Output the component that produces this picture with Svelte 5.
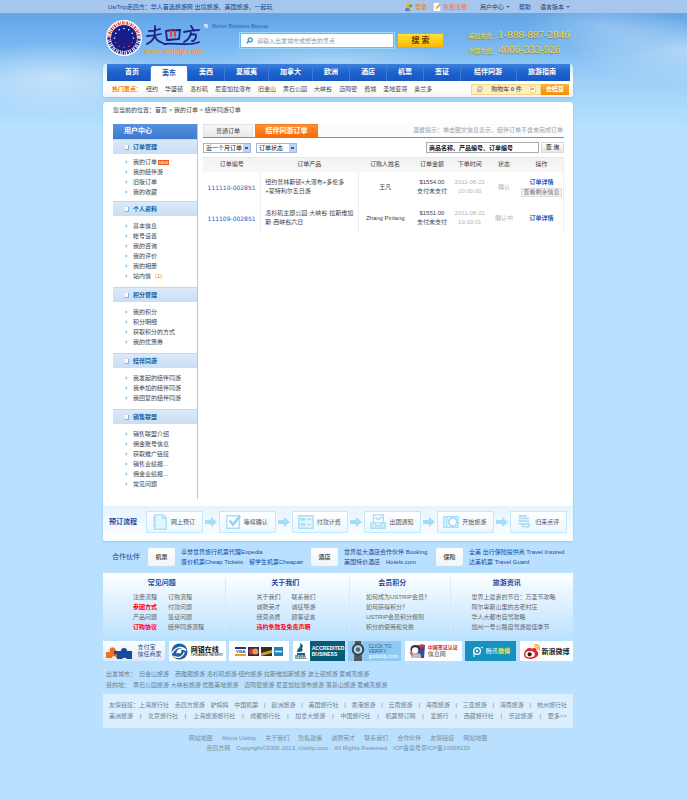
<script>
  const nav = ['首页', '美东', '美西', '夏威夷', '加拿大', '欧洲', '酒店', '机票', '签证', '结伴同游', '旅游指南'];
  const spots = ['纽约', '华盛顿', '洛杉矶', '尼亚加拉瀑布', '旧金山', '黄石公园', '大峡谷', '迈阿密', '费城', '圣地亚哥', '奥兰多'];
  const groups = [
    { title: '订单管理', items: ['我的订单', '我的结伴游', '旧版订单', '我的收藏'] },
    { title: '个人资料', items: ['基本信息', '帐号设置', '我的咨询', '我的评价', '我的相册', '站内信'] },
    { title: '积分管理', items: ['我的积分', '积分明细', '获取积分的方式', '我的优惠券'] },
    { title: '结伴同游', items: ['我发起的结伴同游', '我参加的结伴同游', '我回复的结伴同游'] },
    { title: '销售联盟', items: ['销售联盟介绍', '佣金账号信息', '获取推广链接', '销售业绩报...', '佣金业绩报...', '常见问题'] }
  ];
  const orders = [
    { id: '111110-002851', name: '纽约普林斯顿+大瀑布+多伦多+蒙特利尔五日游', who: '王凡', price: '$1554.00', time: '10:00:00', state: '确认', more: true },
    { id: '111109-002851', name: '洛杉矶主题公园·大峡谷·拉斯维加斯·西峡谷六日', who: 'Zhang Pinlang', price: '$1551.00', time: '10:19:01', state: '确认中', more: false }
  ];
  const steps = ['网上预订', '等候确认', '付款计费', '出团通知', '开始旅游', '归来点评'];
  const partners = [
    { tag: '机票', rows: ['享誉世界旅行机票代理Expedia', '廉价机票Cheap Tickets　留学生机票Cheapair'] },
    { tag: '酒店', rows: ['世界最大酒店合作伙伴 Booking', '美国特价酒店　Hotels.com'] },
    { tag: '保险', rows: ['全美 出行保险提供商 Travel Insured', '达美机票 Travel Guard'] }
  ];
  const help = [
    { title: '常见问题', cls: 'two', items: ['注册流程', '订购流程', '参团方式', '付款问题', '产品问题', '签证问题', '订购协议', '结伴同游流程'], red: [2, 6] },
    { title: '关于我们', cls: 'two', items: ['关于我们', '联系我们', '诚聘英才', '诚征导游', '经营资质', '顾客证言', '违约条款及免责声明'], red: [6] },
    { title: '会员积分', cls: 'one', items: ['如何成为USTRIP会员？', '如何获得积分？', 'USTRIP会员积分规则', '积分的使用和兑换'], red: [] },
    { title: '旅游资讯', cls: 'one', items: ['世界上最贵的节日：万圣节攻略', '阿尔卑斯山里的古老村庄', '华人大都市自驾攻略', '加州一号公路自驾游最佳季节'], red: [] }
  ];
  const links1 = ['走四方旅游', '驴妈妈', '中国机票', '欧洲旅游', '美国旅行社', '香港旅游', '云南旅游', '海南旅游', '三亚旅游', '海南旅游', '杭州旅行社'];
  const links2 = ['美洲旅游', '北京旅行社', '上海旅游旅行社', '成都旅行社', '加拿大旅游', '中国旅行社', '机票预订网', '爱旅行', '西藏旅行社', '乐途旅游'];
  const footer = ['网站地图', 'About Usitrip', '关于我们', '隐私政策', '诚聘英才', '联系我们', '合作伙伴', '友情链接', '网站地图'];
  let keyword = $state('');
</script>

<div class="page">
  <div class="topbar">
    <div class="wrap topin">
      <span>UsiTrip走四方：华人首选旅游网 出境旅游、美国旅游、一起玩</span>
      <nav class="user">
        <a class="org" href="#login"><svg viewBox="0 0 10 10"><circle cx="3.5" cy="3" r="2.3" fill="#f0b040"/><circle cx="7" cy="3.5" r="2" fill="#5b9c3c"/><path d="M0 10c0-6 7-6 7 0z" fill="#3c87cf"/><path d="M5 9c1-4 5-3 5 0z" fill="#eec25c"/></svg>登录</a>
        <a class="org reg" href="#reg"><svg viewBox="0 0 10 10"><path d="M1 0h6l2 2v8H1z" fill="#fff"/><path d="M3 8l1-3 4-4 1 2-4 4z" fill="#eea228"/></svg>免费注册</a>
        <a href="#center">用户中心 <i class="caret"></i></a>
        <a href="#help">帮助</a>
        <a href="#lang">语言版本 <i class="caret"></i></a>
      </nav>
    </div>
  </div>

  <header class="wrap head">
    <a class="logo" href="#home" aria-label="走四方">
      <svg viewBox="0 0 36 36">
        <circle cx="18" cy="18" r="18" fill="#fff"/>
        <path d="M3 18a15 15 0 0 1 30 0" fill="none" stroke="#d8423e" stroke-width="3.4" stroke-dasharray="1.6 .9 .7 1.1"/>
        <path d="M3 18a15 15 0 0 0 30 0" fill="none" stroke="#2b2d91" stroke-width="3.4" stroke-dasharray="1.8 .8 .8 1"/>
        <circle cx="18" cy="18" r="13" fill="#171c88"/>
        {#each Array(12) as _, i}
          <circle cx={18 + 9.5 * Math.cos(i * Math.PI / 6)} cy={18 + 9.5 * Math.sin(i * Math.PI / 6)} r=".8" fill={i > 0 && i < 6 ? '#e24440' : '#fff'}/>
        {/each}
      </svg>
      <svg class="brush" viewBox="0 0 56 22" fill="none" stroke="#20208c" stroke-width="1.8" stroke-linecap="round">
        <path d="M3 6c4 0 8-1 11-2M9 1c0 4 0 7-1 10M1 11c5 0 10-1 14-2M9 10c-1 4-4 7-8 9M9 11c1 4 4 6 8 7"/>
        <path d="M20 6c5-1 10-1 14-1l-1 9c-4 0-8 1-12 1z"/><path d="M25 6v5M29 6v5" stroke="#e23c30"/>
        <path d="M45 1l2 3M38 7c5-1 10-2 15-2M45 6c0 6-3 9-7 11M44 10c3-1 5-1 6 0 0 4-1 6-4 6"/>
        <path d="M18 19c12-2 24 3 35-2"/>
      </svg>
      <b>www.usitrip.com</b>
    </a>
    <div class="mid">
      <p><svg viewBox="0 0 10 10"><circle cx="5" cy="5" r="5" fill="#fff"/><path d="M2 5l2 3 4-6" stroke="#4784c5" stroke-width="2" fill="none"/></svg>Better Business Bureau</p>
      <form class="search" onsubmit={(e) => e.preventDefault()}>
        <label><svg viewBox="0 0 10 10"><circle cx="6" cy="4" r="3" fill="#d6efff" stroke="#278fd0" stroke-width="1.6"/><path d="M4 6L1 9" stroke="#278fd0" stroke-width="2"/></svg>
          <input aria-label="搜索" placeholder="请输入出发城市或想去的景点" bind:value={keyword} />
        </label>
        <button>搜 索</button>
      </form>
    </div>
    <div class="phones">
      <p>美加免费：<b>1-888-887-2846</b></p>
      <p>中国免费：<b>4006-333-926</b></p>
    </div>
  </header>

  <div class="wrap navbox">
    <nav class="nav">
      {#each nav as n, i}<a href="#nav{i}" class:on={i === 1} class:wide={i === 9}>{n}</a>{/each}
    </nav>
    <div class="sub">
      <b>热门景点：</b>
      {#each spots as s}<a href="#spot">{s}</a>{/each}
      <div class="cart">
        <svg viewBox="0 0 10 10"><path d="M1 5h8l-1 4H2z" fill="#bbb"/><path d="M2 5l2-4h4l1 4" fill="none" stroke="#888"/></svg>
        <span>购物车 <b>0</b> 件</span><i class="drop"></i>
      </div>
      <button class="pay">去结算</button>
    </div>
  </div>

  <main class="wrap panel">
    <div class="crumb">您当前的位置：<a href="#home">首页</a> &gt; <a href="#o">我的订单</a> &gt; 结伴同游订单</div>
    <div class="cols">
      <aside>
        <h2>用户中心</h2>
        {#each groups as g, gi}
          <h3><i></i>{g.title}</h3>
          <ul class:first={gi === 0}>
            {#each g.items as it, i}
              <li><a href="#item">{it}</a>{#if gi === 0 && i === 0}<em class="new">NEW</em>{/if}{#if gi === 1 && i === 5}<em class="num">(1)</em>{/if}</li>
            {/each}
          </ul>
        {/each}
      </aside>
      <section class="content">
        <div class="tabs">
          <button>普通订单</button><button class="on">结伴同游订单</button>
          <span>温馨提示：单击图文信息表示，结伴订单不含未完成订单</span>
        </div>
        <form class="filter" onsubmit={(e) => e.preventDefault()}>
          <span class="sel s1"><select aria-label="时间"><option>近一个月订单</option></select></span>
          <span class="sel s2"><select aria-label="状态"><option>订单状态</option></select></span>
          <input aria-label="关键字" value="商品名称、产品编号、订单编号" />
          <button>查 询</button>
        </form>
        <table>
          <colgroup><col style="width:16%"><col style="width:27%"><col style="width:15%"><col style="width:11%"><col style="width:10%"><col style="width:9%"><col style="width:12%"></colgroup>
          <thead><tr><th>订单编号</th><th>订单产品</th><th>订购人姓名</th><th>订单金额</th><th>下单时间</th><th>状态</th><th>操作</th></tr></thead>
          <tbody>
            {#each orders as o}
              <tr>
                <td class="id"><a href="#order">{o.id}</a></td>
                <td class="name">{o.name}</td>
                <td class="who">{o.who}</td>
                <td>{o.price}<br>支付未支付</td>
                <td class="dim">2011-08-22<br>{o.time}</td>
                <td class="dim">{o.state}</td>
                <td class="op"><a href="#detail">订单详情</a>{#if o.more}<button>查看剩余信息</button>{/if}</td>
              </tr>
            {/each}
          </tbody>
        </table>
      </section>
    </div>
    <div class="flow">
      <b>预订流程</b>
      {#each steps as s, i}
        {#if i > 0}<svg class="arr" viewBox="0 0 12 10"><path d="M0 3h6V0l6 5-6 5V7H0z" fill="#a5ddf8"/></svg>{/if}
        <div class="step">
          <svg viewBox="0 0 18 18" fill="none" stroke="#a9dcf7" stroke-width="1.5">
            {#if i === 0}<path d="M3 1h10l3 3v13H3z" fill="#e2f5ff"/><path d="M1 4h3M1 7h3M1 10h3M1 13h3M12 1v4h4"/>
            {:else if i === 1}<path d="M2 2h14v14H2z" fill="#fff"/><path d="M5 7l4 5 8-10" stroke="#96d6f5" stroke-width="3"/>
            {:else if i === 2}<path d="M1 2h16v14H1z" fill="#e2f5ff"/><path d="M3 6h5M3 12h5" stroke-width="3"/><path d="M10 6h5M10 12h5"/>
            {:else if i === 3}<path d="M4 1h11v9H4z" fill="#fff"/><path d="M6 4l3 3 5-4M1 10h4l2 3h5l2-3h3v6H1z" fill="#d4effd"/>
            {:else if i === 4}<path d="M1 3h16v12H1z" fill="#e2f5ff"/><circle cx="11" cy="9" r="4.5" fill="#fff" stroke-width="2"/><path d="M4 3v12"/>
            {:else}<path d="M3 2h9M3 5h12M3 8h12M3 11h12M6 14h6M12 16l4-4" stroke-width="2"/>{/if}
          </svg>
          <span>{s}</span>
        </div>
      {/each}
    </div>
  </main>

  <section class="wrap partners">
    <b>合作伙伴</b>
    {#each partners as p}
      <span class="tag">{p.tag}</span>
      <div>{#each p.rows as r}<a href="#p">{r}</a>{/each}</div>
    {/each}
  </section>

  <section class="wrap help">
    {#each help as h, hi}
      <div class="hcol h{hi}">
        <h4>{h.title}</h4>
        <div class={h.cls}>
          {#each h.items as it, i}<a href="#h" class:red={h.red.includes(i)} class:span={hi === 1 && i === 6}>{it}</a>{/each}
        </div>
      </div>
    {/each}
  </section>

  <div class="wrap badges">
    <a class="ali" href="#b"><svg viewBox="0 0 28 16"><path d="M0 15V9h4a3 3 0 1 1 5 0h5v6h-4a2 2 0 0 0-4 0z" fill="#ee711e"/><path d="M11 16v-5a2 2 0 1 1 0-3h4a3 3 0 1 1 6 0h5v8h-5a3 3 0 0 0-5 0z" fill="#17499c"/></svg><span>支付宝<br>信任商家</span></a>
    <a class="bank" href="#b"><svg viewBox="0 0 18 18"><circle cx="9" cy="9" r="8.5" fill="#24609f"/><path d="M1 11c4-8 12-8 15-3-5-3-9-1-10 3M3 14c5 3 10 0 11-4" fill="none" stroke="#fff" stroke-width="1.4"/><circle cx="9" cy="9" r="2" fill="#fff"/></svg><span><b>网银在线</b><small>CHINABANK PAYMENT</small></span></a>
    <a class="cards" href="#b"><svg viewBox="0 0 48 9"><path d="M0 0h11v9H0z" fill="#fff"/><path d="M0 0h11v2H0z" fill="#1d3c84"/><path d="M0 7h11v2H0z" fill="#e89d24"/><path d="M13 0h11v9H13z" fill="#252a6a"/><circle cx="16.8" cy="4.5" r="3" fill="#df2c28"/><circle cx="20.4" cy="4.5" r="3" fill="#f1a32b"/><path d="M26 0h11v9H26z" fill="#25351e"/><path d="M26 6l11-3v3l-11 3z" fill="#dd9432"/><path d="M39 0h9v9h-9z" fill="#2384b8"/><path d="M40 4.5h7" stroke="#cfeaff" stroke-width="1.6"/><text x="1" y="6.2" font-size="4" font-weight="bold" fill="#1d3c84">VISA</text></svg></a>
    <a class="bbb" href="#b"><span class="bl"><svg viewBox="0 0 12 12"><path d="M5 0c6 3 0 5 3 7L6 9C0 6 7 4 5 0zM3 5l2 4H2zM2 10h8v2H2z" fill="#0c6480"/></svg><b>BBB.</b></span><span class="br">ACCREDITED<br>BUSINESS</span></a>
    <a class="god" href="#b"><svg viewBox="0 0 14 20"><path d="M4 0h6l1 20H3z" fill="#555"/><circle cx="7" cy="8.5" r="6.2" fill="#39424a"/><circle cx="7" cy="8.5" r="4.3" fill="#b9d8e8"/><circle cx="7" cy="8.5" r="2.3" fill="#3d6f92"/></svg><span>CLICK TO<br>VERIFY<br><i>godaddy.com</i></span></a>
    <a class="cn" href="#b"><svg viewBox="0 0 17 18"><path d="M9 2h8l-1 14H8z" fill="#3b4b98"/><path d="M7 3l8-2 1 3-7 1z" fill="#e2323c"/><circle cx="6.5" cy="7" r="5" fill="#2c3242"/><circle cx="6.5" cy="8" r="3.4" fill="#fff"/><path d="M3 11h9l1 5H2z" fill="#b9bfd0"/><path d="M0 9l4 3-1 2z" fill="#d8262e"/></svg><span><b>中国签证认证</b>信息网</span></a>
    <a class="tx" href="#b"><svg viewBox="0 0 11 11"><circle cx="5" cy="5" r="3.4" fill="none" stroke="#fff" stroke-width="1.3"/><circle cx="5" cy="5" r="1.2" fill="#fff"/><path d="M2 6v5M9 1l2 1" stroke="#fff"/></svg><span>腾讯<b>微博</b></span></a>
    <a class="sina" href="#b"><svg viewBox="0 0 18 16"><path d="M1 11C1 7 7 2 9 5c4-2 6 0 5 2 6 4-1 9-6 9s-7-2-7-5z" fill="#df2630"/><ellipse cx="7.5" cy="11" rx="5" ry="3.5" fill="#fff"/><circle cx="7" cy="11" r="2.2" fill="#202020"/><path d="M12 3c2-1 4 1 3 3M12 .8c4-1 6 2 5.3 6" fill="none" stroke="#f39a24" stroke-width="1.3"/></svg><b>新浪微博</b></a>
  </div>

  <div class="wrap hot">
    <p>出发城市：　旧金山旅游　西雅图旅游 洛杉矶旅游 纽约旅游 拉斯维加斯旅游 波士顿旅游 夏威夷旅游</p>
    <p>目的地：　黄石公园旅游 大峡谷旅游 优胜美地旅游　迈阿密旅游 尼亚加拉瀑布旅游 落基山旅游 夏威夷旅游</p>
  </div>

  <div class="wrap links">
    <p><span>友情链接：上海旅行社</span>{#each links1 as l, i}<a href="#l">{l}</a>{#if i > 1 && i < 10}<i>|</i>{/if}{/each}</p>
    <p>{#each links2 as l}<a href="#l">{l}</a><i>|</i>{/each}<a href="#more">更多&gt;&gt;</a></p>
  </div>

  <footer class="wrap foot">
    <nav>{#each footer as f}<a href="#f">{f}</a>{/each}</nav>
    <p>走四方网　Copyright©2005-2013, Usitrip.com　All Rights Reserved　ICP备案号京ICP备10058130</p>
  </footer>
</div>

<style>
  :global(body) { margin: 0; background: #b9e1ff; }
  .page {
    font: 6px/10px "Liberation Sans", "Noto Sans CJK SC", sans-serif;
    color: #444; padding-bottom: 48px;
    background:
      radial-gradient(ellipse 110px 36px at 8% 78px, #ffffff66, #fff0),
      radial-gradient(ellipse 120px 34px at 100% 50px, #ffffff66, #fff0),
      radial-gradient(ellipse 80px 26px at 88% 26px, #ffffff44, #fff0),
      radial-gradient(ellipse 120px 20px at 48% 62px, #ffffff44, #fff0),
      linear-gradient(#5a9de2, #74b4ef 40px, #9dd0f8 80px, #b9e1ff 130px);
  }
  * { box-sizing: border-box; }
  p, h2, h3, h4, ul { margin: 0; padding: 0; list-style: none; font-size: 6px; }
  a { color: inherit; text-decoration: none; }
  button, input, select { font: inherit; color: inherit; border: 0; padding: 0; margin: 0; border-radius: 0; background: none; min-width: 0; }
  svg { flex: none; display: block; }
  .wrap { width: calc(100% - 32px); max-width: 470px; margin: 0 auto; }
  .page { padding-right: 11px; }
  .topbar { margin-right: -11px; padding-right: 11px; background: #a7c6ee; color: #13437f; height: 13px; }
  .topin { display: flex; justify-content: space-between; padding: 2px 3px 0 5px; }
  .user { display: flex; gap: 9px; }
  .user a { display: flex; align-items: center; gap: 2px; }
  .user svg { width: 8px; height: 8px; }
  .user .org { color: #f57a10; }
  .user .reg { margin-right: 4px; margin-left: -3px; }
  .caret { border: 2px solid transparent; border-top-color: #3c69a8; border-bottom: 0; }

  .head { display: flex; height: 51px; padding-left: 3px; }
  .logo { display: grid; grid-template-columns: 36px 56px; column-gap: 4px; width: 98px; padding-top: 7px; align-content: start; }
  .logo > svg:first-child { width: 36px; height: 36px; grid-row: span 2; }
  .brush { width: 56px; height: 24px; margin-top: 4px; }
  .logo b { font: 700 8px/8px "Liberation Serif", serif; color: #f7a11a; margin-left: -2px; }
  .mid { flex: 1; padding-top: 8px; }
  .mid p { display: flex; gap: 4px; color: #2b62a8; font-family: "Liberation Serif", serif; align-items: center; }
  .mid p svg { width: 4px; height: 4px; }
  .search { display: flex; gap: 3px; margin: 2px 0 0 36px; }
  .search label { display: flex; align-items: center; gap: 4px; width: 154px; height: 15px; padding: 0 5px; background: #fff; border: 1px solid #65bdf2; box-shadow: 0 0 0 1px #9bd9fb; }
  .search label svg { width: 7px; height: 7px; }
  .search input { flex: 1; outline: 0; }
  .search input::placeholder { color: #999; opacity: 1; }
  .search button { width: 47px; height: 15px; background: linear-gradient(#ffe22c, #fbb90a); border: 1px solid #e7a818; color: #6d3304; font-size: 8px; font-weight: 700; }
  .phones { width: 105px; padding-top: 14px; color: #ffd52c; text-shadow: 0 1px 1px #6a7a58; }
  .phones p { line-height: 14px; height: 15px; white-space: nowrap; }
  .phones b { font: 400 11px/14px "Liberation Serif", serif; }

  .navbox { background: linear-gradient(#ffffff88, #fff 18px); border-radius: 3px; box-shadow: 0 1px 3px #8fc6ec; }
  .nav { display: flex; height: 17px; margin: 0 3px 0 4px; padding-left: 7px; background: linear-gradient(#3b80df, #1d62cd 50%, #1857c2); color: #fff; font-size: 7px; font-weight: 700; }
  .nav a { padding: 0 11px; line-height: 16px; border-right: 1px solid #3d7bd6; white-space: nowrap; flex: none; }
  .nav a:last-child { border: 0; padding-right: 0; }
  .nav .wide { padding: 0 14px 0 13px; }
  .nav .on { background: #fff; color: #1d56b4; margin-top: 2px; border-radius: 2px 2px 0 0; line-height: 13px; }
  .sub { display: flex; align-items: center; gap: 7px; height: 16px; padding: 0 4px 0 9px; white-space: nowrap; background: linear-gradient(#fff 50%, #f3f3f3); border-radius: 0 0 3px 3px; }
  .sub > b { color: #f97a12; margin-right: -3px; }
  .cart { margin-left: auto; display: flex; align-items: center; justify-content: space-around; width: 70px; height: 11px; background: #fdeec4; border: 1px solid #f3d58c; }
  .cart svg { width: 7px; height: 7px; }
  .cart b { color: #146cd2; }
  .drop { width: 6px; height: 7px; background: linear-gradient(#f7a53b, #f7a53b) 50% 50% / 3px 2px no-repeat #fff; border: 1px solid #f5d590; }
  .pay { width: 28px; height: 11px; margin-left: -7px; background: linear-gradient(#ffb62e, #f38d06); color: #fff; font-weight: 700; }

  .panel { margin-top: 5px; background: #fff; border: solid #9dd3f8; border-width: 0 0 1px; border-radius: 3px; box-shadow: 0 0 2px #7fc0ee; }
  .crumb { padding: 3px 10px 0; height: 22px; }
  .cols { display: flex; gap: 5px; padding: 0 9px 0 10px; }
  aside { width: 85px; flex: none; border-right: 1px solid #a5cff2; }
  h2 { height: 15px; line-height: 14px; padding-left: 11px; font-size: 7px; color: #fff; background: linear-gradient(#5893e0, #3c79cf); }
  h3 { display: flex; align-items: center; gap: 4px; height: 15px; padding-left: 12px; color: #175f9e; background: linear-gradient(#dce9f8, #c9def4); border-top: 1px solid #bcdaf4; }
  h3 i { width: 4px; height: 5px; border: solid #7db3de; border-width: 0 1px 1px 0; background: #fff; }
  aside ul { padding: 5px 0 6px 20px; }
  aside ul.first { padding: 3px 0 4px 20px; }
  aside ul:last-child { padding-bottom: 10px; }
  li { height: 10px; display: flex; align-items: center; }
  li::before { content: ""; width: 1px; height: 1px; border: solid #78bfe2; border-width: 1px 1px 0 0; transform: rotate(45deg); margin: 0 6px 0 -8px; box-sizing: content-box; flex: none; }
  em { font-style: normal; color: #f47a10; margin-left: 4px; }
  em.new { background: #f35c11; color: #fff; font-size: 4px; line-height: 5px; padding: 0 1px; margin-left: 1px; }
  .content { flex: 1; min-width: 0; }
  .tabs { display: flex; gap: 2px; height: 14px; border-bottom: 1px solid #ee6b2c; background: #fcfcfc; }
  .tabs button { width: 50px; background: linear-gradient(#f7f7f7, #e9e9e9); border: 1px solid #e3e3e3; border-bottom: 0; }
  .tabs .on { width: 63px; background: linear-gradient(#ff9232, #fb6a04); border-color: #f27a20; color: #fff; font-size: 7px; font-weight: 700; }
  .tabs span { margin-left: auto; line-height: 13px; color: #a2a2a2; white-space: nowrap; padding-right: 1px; }
  .filter { display: flex; height: 19px; align-items: center; color: #111; }
  .sel { position: relative; height: 10px; border: 1px solid #9fb5d2; display: flex; margin-right: 5px; }
  .s1 { width: 48px; } .s2 { width: 41px; }
  .sel select { appearance: none; width: 100%; line-height: 8px; padding-left: 2px; outline: 0; }
  .sel::after { content: ""; position: absolute; right: 0; top: 0; width: 7px; height: 8px; background: linear-gradient(#3d5b92, #3d5b92) 50% 50% / 3px 2px no-repeat #bcd2f6; pointer-events: none; }
  .filter input { width: 113px; height: 11px; margin-left: auto; border: 1px solid #aaa; padding: 0 2px; font-weight: 700; line-height: 9px; }
  .filter button { width: 23px; height: 11px; margin-left: 2px; line-height: 9px; background: linear-gradient(#fff, #e6e6e6); border: 1px solid #ddd; }
  table { width: 100%; table-layout: fixed; border-collapse: collapse; line-height: 9px; text-align: center; border-right: 1px solid #eee; }
  th { height: 14px; padding: 0; font-weight: 400; background: linear-gradient(#f2f2f2, #f7f7f7); border-top: 1px solid #e8e8e8; white-space: nowrap; }
  td { height: 31px; padding: 0; overflow-wrap: anywhere; }
  td.id { font-family: "DejaVu Sans", sans-serif; color: #1c5dc4; border-right: 1px solid #eee; }
  td.name { text-align: left; padding: 0 4px; border-right: 1px solid #eee; }
  td.who { white-space: nowrap; }
  .dim { color: #b5b5b5; }
  .op a { color: #1359c8; font-weight: 700; display: block; }
  .op button { width: 41px; height: 9px; line-height: 7px; background: #f3f3f3; border: 1px solid #ddd; color: #777; white-space: nowrap; margin: 1px auto 0; display: block; }

  .flow { display: flex; align-items: center; height: 35px; margin-top: 7px; padding: 0 6px 3px; background: linear-gradient(#e4f4ff, #fff); border-radius: 0 0 3px 3px; }
  .flow > b { font-size: 7px; color: #1c479e; width: 37px; flex: none; white-space: nowrap; }
  .arr { width: 12px; height: 10px; margin: 0 2px; }
  .step { flex: 1; display: flex; align-items: center; gap: 3px; height: 22px; padding-left: 5px; background: linear-gradient(#fff, #eaf7ff); border: 1px solid #c5e8fb; white-space: nowrap; color: #555; }
  .step svg { width: 16px; height: 16px; }

  .partners { display: flex; align-items: center; height: 31px; padding: 0 0 2px 9px; color: #21489a; white-space: nowrap; }
  .partners > b { font-size: 7px; font-weight: 400; width: 36px; flex: none; }
  .tag { width: 27px; height: 18px; flex: none; line-height: 18px; text-align: center; font-weight: 700; color: #555; background: linear-gradient(#fff, #eef5fa); border-radius: 2px; }
  .partners div { width: 136px; flex: none; padding-left: 6px; }
  .partners div:nth-of-type(2) { width: 98px; }
  .partners div:nth-of-type(3) { width: 100px; }
  .partners div a { display: block; }

  .help { display: flex; height: 68px; padding-top: 5px; background: linear-gradient(#fff, #dff1ff 30px, #b9e1ff); color: #666; }
  .hcol { flex: 123; height: 56px; border-right: 1px solid #d6eaf8; white-space: nowrap; }
  .hcol:last-child { border: 0; }
  .h2 { flex: 100; }
  .hcol h4 { font-size: 7px; color: #1e48a0; padding-right: 5px; text-align: center; }
  .h2 h4 { padding-right: 15px; }
  .h3 h4 { padding-right: 10px; }
  .hcol a { line-height: 10px; }
  .two { display: grid; grid-template-columns: 35px 1fr; padding: 4px 0 0 30px; }
  .one { display: grid; padding: 4px 0 0 16px; }
  .h3 .one { padding-left: 21px; }
  .span { grid-column: span 2; }
  .red { color: #f00; font-weight: 700; }

  .badges { display: flex; justify-content: space-between; height: 20px; }
  .badges a { display: flex; align-items: center; justify-content: center; gap: 3px; background: #fff; overflow: hidden; line-height: 7px; white-space: nowrap; }
  .badges .ali { width: 62px; color: #1c4f9c; background: linear-gradient(#fff, #dceaf7); }
  .ali svg { width: 28px; height: 16px; }
  .badges .bank { width: 57px; color: #111; }
  .bank svg { width: 17px; height: 17px; }
  .bank b { display: block; font-size: 7px; }
  .bank small { display: block; font-size: 3px; line-height: 4px; }
  .badges .cards { width: 60px; }
  .cards svg { width: 48px; height: 9px; }
  .badges .bbb { width: 52px; gap: 0; justify-content: stretch; }
  .bl { width: 17px; display: grid; justify-items: center; color: #0c6480; font-size: 5px; line-height: 5px; }
  .bl svg { width: 12px; height: 12px; }
  .br { flex: 1; height: 20px; padding: 4px 0 0 2px; background: #075c78; color: #fff; font-size: 5px; line-height: 6px; font-weight: 700; }
  .badges .god { width: 53px; background: #90c9f1; color: #1e5e92; line-height: 5px; font-size: 5px; }
  .god svg { width: 14px; height: 20px; }
  .god i { color: #fff; font-style: normal; }
  .badges .cn { width: 57px; color: #555; }
  .cn svg { width: 16px; height: 17px; }
  .cn b { display: block; color: #d11f2d; font-size: 5px; }
  .badges .tx { width: 51px; background: #1791bd; color: #fff; }
  .tx svg { width: 11px; height: 11px; }
  .tx b { color: #ffe95a; }
  .badges .sina { width: 53px; color: #222; font-size: 7px; gap: 1px; }
  .sina svg { width: 17px; height: 15px; }

  .hot { padding: 8px 3px 0; color: #6a7f91; white-space: nowrap; height: 33px; }
  .hot p { line-height: 11px; }
  .links { background: #dbeffe; height: 34px; padding: 6px 6px 0; color: #6f7f8c; white-space: nowrap; }
  .links p { display: flex; justify-content: space-between; line-height: 11px; }
  .links i { font-style: normal; }
  .foot { padding-top: 5px; text-align: center; color: #7d8d99; }
  .foot nav { display: flex; gap: 9px; justify-content: center; }
</style>
